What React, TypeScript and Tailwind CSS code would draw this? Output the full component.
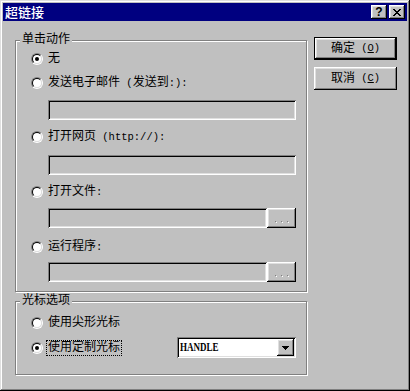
import React from 'react'

const raised =
  'shadow-[inset_-1px_-1px_0_#000,inset_1px_1px_0_#fff,inset_-2px_-2px_0_#808080,inset_2px_2px_0_#dfdfdf]'
const sunken =
  'shadow-[inset_1px_1px_0_#808080,inset_-1px_-1px_0_#fff,inset_2px_2px_0_#000,inset_-2px_-2px_0_#dfdfdf]'
const etched = 'border border-[#808080] shadow-[inset_1px_1px_0_#fff,1px_1px_0_#fff]'

// half-width ascii runs, a bit smaller so they keep the 6px bitmap advance
const A = ({ children }: { children: React.ReactNode }) => <span className="text-[10.5px]">{children}</span>

function Radio({ checked = false }: { checked?: boolean }) {
  return (
    <span className="w-3 h-3 shrink-0 flex rounded-full border border-t-[#808080] border-l-[#808080] border-r-white border-b-white">
      <span className="flex-1 flex items-center justify-center rounded-full border border-t-black border-l-black border-r-[#dfdfdf] border-b-[#dfdfdf] bg-white">
        {checked && <span className="w-1 h-1 rounded-full bg-black" />}
      </span>
    </span>
  )
}

function RadioRow({ label, checked, className = '' }: { label: React.ReactNode; checked?: boolean; className?: string }) {
  return (
    <div className={`flex items-center h-4 ${className}`}>
      <span className="ml-[15px]">
        <Radio checked={checked} />
      </span>
      <span className="ml-[5px] leading-[14px]">{label}</span>
    </div>
  )
}

function Field({ w, className = '' }: { w: string; className?: string }) {
  return <div className={`h-[20px] bg-[#c0c0c0] ${sunken} ${w} ${className}`} />
}

function Browse() {
  return (
    <div className={`w-[29px] h-[20px] flex items-center justify-center gap-[5px] pt-[6px] bg-[#c0c0c0] ${raised}`}>
      <span className="w-px h-px bg-[#808080] shadow-[1px_1px_0_#fff]" />
      <span className="w-px h-px bg-[#808080] shadow-[1px_1px_0_#fff]" />
      <span className="w-px h-px bg-[#808080] shadow-[1px_1px_0_#fff]" />
    </div>
  )
}

function GroupLabel({ children }: { children: React.ReactNode }) {
  return (
    <span className="absolute left-[4px] top-[-8px] px-[2px] bg-[#c0c0c0] leading-[14px]">{children}</span>
  )
}

export default function App() {
  return (
    <div
      className={`w-[410px] h-[391px] p-[3px] bg-[#c0c0c0] text-black text-[12px] font-['Liberation_Mono','Noto_Sans_CJK_SC',monospace] shadow-[inset_-1px_-1px_0_#000,inset_1px_1px_0_#dfdfdf,inset_-2px_-2px_0_#808080,inset_2px_2px_0_#fff]`}
    >
      {/* Title bar */}
      <div className="h-[18px] bg-[#000080] flex items-center pl-[2px] pr-[2px]">
        <span className="text-white text-[13px] leading-[14px] font-medium font-['Noto_Sans_CJK_SC',sans-serif]">超链接</span>
        <div className="ml-auto flex gap-[2px]">
          <div className={`w-[16px] h-[14px] bg-[#c0c0c0] flex items-center justify-center ${raised}`}>
            <span className="font-['Liberation_Sans',sans-serif] font-bold text-[12px] leading-none pb-px">?</span>
          </div>
          <div className={`w-[16px] h-[14px] bg-[#c0c0c0] flex items-center justify-center ${raised}`}>
            <svg width="8" height="7" viewBox="0 0 8 7" shapeRendering="crispEdges">
              <path
                d="M0 0h2v1h-2zM6 0h2v1h-2zM1 1h2v1h-2zM5 1h2v1h-2zM2 2h4v1h-4zM3 3h2v1h-2zM2 4h4v1h-4zM1 5h2v1h-2zM5 5h2v1h-2zM0 6h2v1h-2zM6 6h2v1h-2z"
                fill="#000"
              />
            </svg>
          </div>
        </div>
      </div>

      <div className="flex">
        {/* Left column */}
        <div className="ml-[12px] mt-[19px]">
          <div className={`relative w-[292px] h-[252px] ${etched}`}>
            <GroupLabel>单击动作</GroupLabel>
            <RadioRow className="mt-[10px]" checked label="无" />
            <RadioRow
              className="mt-[8px]"
              label={
                <>
                  发送电子邮件<A> (</A>发送到<A>:):</A>
                </>
              }
            />
            <Field w="w-[248px]" className="ml-[32px] mt-[9px]" />
            <RadioRow
              className="mt-[9px]"
              label={
                <>
                  打开网页<A> (http://):</A>
                </>
              }
            />
            <Field w="w-[248px]" className="ml-[32px] mt-[10px]" />
            <RadioRow className="mt-[9px]" label={<>打开文件<A>:</A></>} />
            <div className="flex ml-[32px] mt-[8px]">
              <Field w="w-[219px]" />
              <Browse />
            </div>
            <RadioRow className="mt-[11px]" label={<>运行程序<A>:</A></>} />
            <div className="flex ml-[32px] mt-[7px]">
              <Field w="w-[219px]" />
              <Browse />
            </div>
          </div>

          <div className={`relative w-[292px] h-[74px] mt-[9px] ${etched}`}>
            <GroupLabel>光标选项</GroupLabel>
            <RadioRow className="mt-[13px]" label="使用尖形光标" />
            <div className="flex items-center h-[21px] mt-[6px]">
              <span className="ml-[15px]">
                <Radio checked />
              </span>
              <span className="ml-[3px] px-px border border-dotted border-black leading-[14px]">使用定制光标</span>
              <div className={`ml-auto mr-[10px] w-[119px] h-[21px] bg-white flex items-center p-[2px] ${sunken}`}>
                <span className="ml-px flex-1 min-w-0">
                  <span className="inline-block origin-left scale-x-[0.75] text-[12px] font-['Liberation_Serif',serif] font-bold leading-none">
                    HANDLE
                  </span>
                </span>
                <div className={`w-[17px] h-[17px] bg-[#c0c0c0] flex items-center justify-center ${raised}`}>
                  <svg width="7" height="4" viewBox="0 0 7 4" shapeRendering="crispEdges">
                    <path d="M0 0h7v1h-7zM1 1h5v1h-5zM2 2h3v1h-3zM3 3h1v1h-1z" fill="#000" />
                  </svg>
                </div>
              </div>
            </div>
          </div>
        </div>

        {/* Right column */}
        <div className="ml-[7px] mt-[16px] flex flex-col">
          <div className="w-[83px] h-[23px] border border-black">
            <div className={`w-full h-full flex items-center justify-center leading-none ${raised}`}>
              确定<A>&nbsp;(<span className="underline">O</span>)</A>
            </div>
          </div>
          <div className={`w-[83px] h-[23px] mt-[7px] flex items-center justify-center leading-none ${raised}`}>
            取消<A>&nbsp;(<span className="underline">C</span>)</A>
          </div>
        </div>
      </div>
    </div>
  )
}
